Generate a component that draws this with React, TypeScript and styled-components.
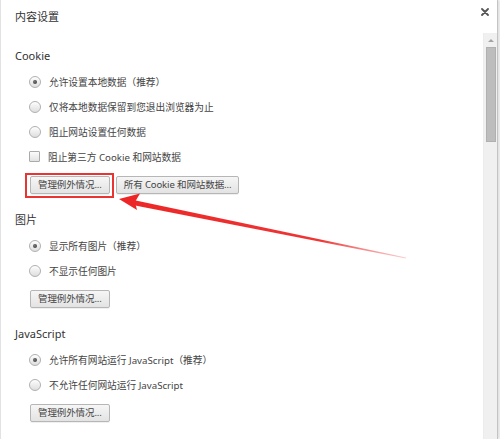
import React from 'react';
import styled, { createGlobalStyle } from 'styled-components';

const GlobalStyle = createGlobalStyle`
  html, body {
    margin: 0;
    padding: 0;
    background: #ffffff;
  }
  body {
    font-family: "Noto Sans", "Noto Sans CJK SC", sans-serif;
  }
`;

const Dialog = styled.div`
  position: relative;
  width: 496px;
  height: 439px;
  overflow: hidden;
  display: flex;
  flex-direction: column;
  background: #fff;
  border-left: 1px solid #e2e2e2;
  border-right: 1px solid #c4c4c4;
  box-shadow: 2px 0 2px rgba(0, 0, 0, 0.12);
`;

const Header = styled.div`
  height: 33px;
  flex-shrink: 0;
  display: flex;
  align-items: center;
  justify-content: space-between;
  padding: 0 6px 0 14px;
`;

const Title = styled.h1`
  margin: 0;
  font-size: 11px;
  font-weight: normal;
  color: #333;
  line-height: 1;
`;

const CloseButton = styled.button`
  width: 12px;
  height: 12px;
  padding: 0;
  border: 0;
  background: transparent;
  display: flex;
  align-items: center;
  justify-content: center;
  margin-top: -10px;
`;

const Body = styled.div`
  flex: 1;
  display: flex;
  min-height: 0;
`;

const Content = styled.div`
  flex: 1;
  padding: 13px 0 0 14px;
`;

const Section = styled.section`
  & + & {
    margin-top: 16px;
  }
`;

const SectionTitle = styled.h2`
  margin: 0 0 3px;
  height: 20px;
  line-height: 20px;
  font-size: 11px;
  font-weight: normal;
  color: #333;
`;

const Option = styled.label`
  display: flex;
  align-items: center;
  gap: 8px;
  height: 25px;
  padding-left: 14px;
  font-size: 9.7px;
  color: #444;
`;

const Radio = styled.span<{ checked?: boolean }>`
  position: relative;
  width: 10px;
  height: 10px;
  border-radius: 50%;
  border: 1px solid #b0b0b0;
  background: linear-gradient(#fdfdfd, #dedede);
  box-shadow: inset 0 1px 1px rgba(255, 255, 255, 0.8);

  &::after {
    content: '';
    display: ${(p) => (p.checked ? 'block' : 'none')};
    position: absolute;
    left: 3px;
    top: 3px;
    width: 4px;
    height: 4px;
    border-radius: 50%;
    background: radial-gradient(circle at 40% 40%, #777, #333);
  }
`;

const Checkbox = styled.span`
  width: 9px;
  height: 9px;
  border: 1px solid #aaa;
  border-radius: 1px;
  background: linear-gradient(#fbfbfb, #e2e2e2);
`;

const ButtonRow = styled.div`
  display: flex;
  gap: 6px;
  margin-top: 7px;
  padding-left: 15px;
`;

const Button = styled.button<{ marked?: boolean }>`
  position: relative;
  height: 18px;
  padding: 0 7px;
  font-family: "Noto Sans", "Noto Sans CJK SC", sans-serif;
  font-size: 9.5px;
  line-height: 16px;
  letter-spacing: -0.1px;
  color: #444;
  border: 1px solid #b6b6b6;
  border-radius: 2px;
  background: linear-gradient(#f6f6f6, #e3e3e3);
  box-shadow: 0 1px 0 rgba(0, 0, 0, 0.06);

  &::after {
    content: '';
    display: ${(p) => (p.marked ? 'block' : 'none')};
    position: absolute;
    left: -6px;
    right: -5px;
    top: -4px;
    bottom: -5px;
    border: 2px solid #ea3434;
  }
`;

const Scrollbar = styled.div`
  width: 13px;
  flex-shrink: 0;
  display: flex;
  flex-direction: column;
  align-items: center;
  background: #f0f0f0;
  border-left: 1px solid #ececec;
`;

const ScrollArrow = styled.div`
  height: 14px;
  display: flex;
  align-items: center;
  justify-content: center;

  &::before {
    content: '';
    border-left: 3px solid transparent;
    border-right: 3px solid transparent;
    border-bottom: 3px solid #a3a3a3;
  }
`;

const ScrollThumb = styled.div`
  width: 10px;
  height: 95px;
  background: #bdbdbd;
  border: 1px solid #b0b0b0;
  box-sizing: border-box;
`;

const Annotation = styled.svg`
  position: absolute;
  left: 0;
  top: 0;
  pointer-events: none;
`;

interface OptionItem {
  label: string;
  kind: 'radio' | 'checkbox';
  checked?: boolean;
}

interface SectionData {
  title: string;
  options: OptionItem[];
  buttons: string[];
}

const sections: SectionData[] = [
  {
    title: 'Cookie',
    options: [
      { label: '允许设置本地数据（推荐）', kind: 'radio', checked: true },
      { label: '仅将本地数据保留到您退出浏览器为止', kind: 'radio' },
      { label: '阻止网站设置任何数据', kind: 'radio' },
      { label: '阻止第三方 Cookie 和网站数据', kind: 'checkbox' },
    ],
    buttons: ['管理例外情况...', '所有 Cookie 和网站数据...'],
  },
  {
    title: '图片',
    options: [
      { label: '显示所有图片（推荐）', kind: 'radio', checked: true },
      { label: '不显示任何图片', kind: 'radio' },
    ],
    buttons: ['管理例外情况...'],
  },
  {
    title: 'JavaScript',
    options: [
      { label: '允许所有网站运行 JavaScript（推荐）', kind: 'radio', checked: true },
      { label: '不允许任何网站运行 JavaScript', kind: 'radio' },
    ],
    buttons: ['管理例外情况...'],
  },
];

const CloseIcon = () => (
  <svg width="8" height="8" viewBox="0 0 8 8">
    <path d="M1 1 L7 7 M7 1 L1 7" stroke="#555" strokeWidth="1.8" strokeLinecap="round" />
  </svg>
);

const RedArrow = () => (
  <Annotation width="500" height="439" viewBox="0 0 500 439">
    <defs>
      <linearGradient id="fade" x1="118" y1="199" x2="405" y2="258" gradientUnits="userSpaceOnUse">
        <stop offset="0" stopColor="#ec2626" />
        <stop offset="0.7" stopColor="#ef3535" />
        <stop offset="1" stopColor="#f25a5a" stopOpacity="0.3" />
      </linearGradient>
    </defs>
    <polygon points="130,199.5 405,257.5 405,258.5 129,204.5" fill="url(#fade)" />
    <polygon points="118,199 139,193.5 134,202 136,210" fill="#ec2626" />
  </Annotation>
);

export default function App() {
  return (
    <>
      <GlobalStyle />
      <Dialog>
        <Header>
          <Title>内容设置</Title>
          <CloseButton aria-label="关闭">
            <CloseIcon />
          </CloseButton>
        </Header>
        <Body>
          <Content>
            {sections.map((section, si) => (
              <Section key={section.title}>
                <SectionTitle>{section.title}</SectionTitle>
                {section.options.map((opt) => (
                  <Option key={opt.label}>
                    {opt.kind === 'radio' ? <Radio checked={opt.checked} /> : <Checkbox />}
                    {opt.label}
                  </Option>
                ))}
                <ButtonRow>
                  {section.buttons.map((b, bi) => (
                    <Button key={b} marked={si === 0 && bi === 0}>
                      {b}
                    </Button>
                  ))}
                </ButtonRow>
              </Section>
            ))}
          </Content>
          <Scrollbar>
            <ScrollArrow />
            <ScrollThumb />
          </Scrollbar>
        </Body>
        <RedArrow />
      </Dialog>
    </>
  );
}
